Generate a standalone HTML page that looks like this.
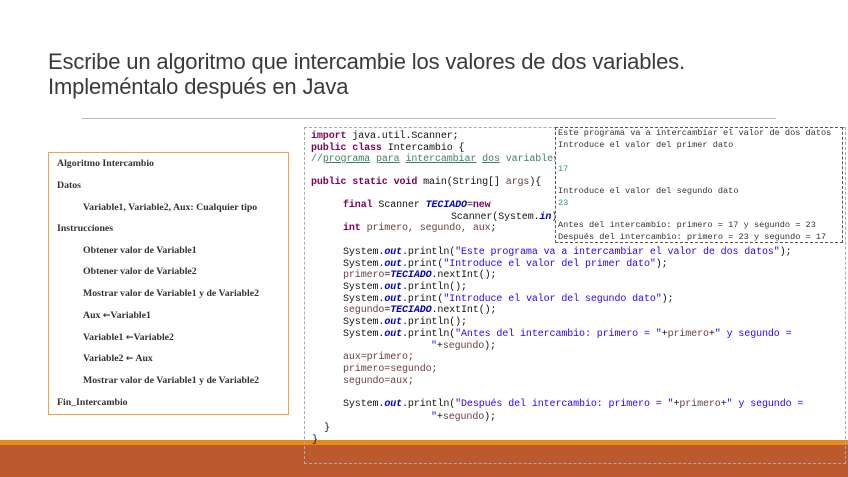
<!DOCTYPE html>
<html><head><meta charset="utf-8"><style>
body{margin:0;width:848px;height:477px;position:relative;overflow:hidden;background:#fff;font-family:"Liberation Sans",sans-serif}
.t{position:absolute;left:48px;font-size:22px;color:#3a3a3a;letter-spacing:-0.15px;line-height:24px}
.hr{position:absolute;left:82px;top:118px;width:694px;height:1px;background:#bbb}
.alg{position:absolute;left:48px;top:152px;width:239px;height:261px;border:1px solid #f0a050}
.alg div{position:absolute;font-family:"Liberation Serif",serif;font-weight:bold;font-size:9.8px;color:#333;white-space:nowrap}
.code{position:absolute;left:304px;top:127px;width:540px;height:335px;border:1px dashed #aaa}
.l{position:absolute;font-family:"Liberation Mono",monospace;font-size:10px;color:#111;white-space:pre;letter-spacing:-0.1px}
.k{color:#7f0055;font-weight:bold}.s{color:#2a00ff}.o{color:#0000c0;font-weight:bold;font-style:italic}.v{color:#6a3e3e}.c{color:#3f7f5f}
.con{position:absolute;left:555px;top:127px;width:286px;height:114px;border:1px dashed #555;background:#fff}
.con div{position:absolute;left:2px;font-family:"Liberation Mono",monospace;font-size:8.6px;color:#333;white-space:pre;letter-spacing:0}
.b1{position:absolute;left:0;top:440px;width:848px;height:5px;background:#e38a1c}
.b2{position:absolute;left:0;top:445px;width:848px;height:32px;background:#bd5a2d}
.a{font-family:"DejaVu Sans",sans-serif;font-weight:bold;font-size:9px}
</style></head><body>
<div class="t" style="top:50px">Escribe un algoritmo que intercambie los valores de dos variables.</div>
<div class="t" style="top:75px">Impleméntalo después en Java</div>
<div class="hr"></div>
<div class="alg">
<div style="left:8px;top:5px">Algoritmo Intercambio</div>
<div style="left:8px;top:27px">Datos</div>
<div style="left:34px;top:49px">Variable1, Variable2, Aux: Cualquier tipo</div>
<div style="left:8px;top:70px">Instrucciones</div>
<div style="left:34px;top:92px">Obtener valor de Variable1</div>
<div style="left:34px;top:113px">Obtener valor de Variable2</div>
<div style="left:34px;top:135px">Mostrar valor de Variable1 y de Variable2</div>
<div style="left:34px;top:157px">Aux <span class="a">←</span>Variable1</div>
<div style="left:34px;top:179px">Variable1 <span class="a">←</span>Variable2</div>
<div style="left:34px;top:200px">Variable2 <span class="a">←</span> Aux</div>
<div style="left:34px;top:222px">Mostrar valor de Variable1 y de Variable2</div>
<div style="left:8px;top:244px">Fin_Intercambio</div>
</div>
<div class="b1"></div><div class="b2"></div>
<div class="code"></div>
<div class="l" style="left:311px;top:131px"><span class="k">import</span> java.util.Scanner;</div>
<div class="l" style="left:311px;top:143px"><span class="k">public class</span> Intercambio {</div>
<div class="l c" style="left:311px;top:154px">//<u>programa</u> <u>para</u> <u>intercambiar</u> <u>dos</u> variables</div>
<div class="l" style="left:311px;top:177px"><span class="k">public static void</span> main(String[] <span class="v">args</span>){</div>
<div class="l" style="left:343px;top:200px"><span class="k">final</span> Scanner <span class="o">TECIADO</span>=<span class="k">new</span></div>
<div class="l" style="left:451px;top:212px">Scanner(System.<span class="o">in</span>);</div>
<div class="l" style="left:343px;top:223px"><span class="k">int</span> <span class="v">primero, segundo, aux</span>;</div>
<div class="l" style="left:343px;top:247px">System.<span class="o">out</span>.println(<span class="s">"Este programa va a intercambiar el valor de dos datos"</span>);</div>
<div class="l" style="left:343px;top:259px">System.<span class="o">out</span>.print(<span class="s">"Introduce el valor del primer dato"</span>);</div>
<div class="l" style="left:343px;top:270px"><span class="v">primero</span>=<span class="o">TECIADO</span>.nextInt();</div>
<div class="l" style="left:343px;top:282px">System.<span class="o">out</span>.println();</div>
<div class="l" style="left:343px;top:294px">System.<span class="o">out</span>.print(<span class="s">"Introduce el valor del segundo dato"</span>);</div>
<div class="l" style="left:343px;top:305px"><span class="v">segundo</span>=<span class="o">TECIADO</span>.nextInt();</div>
<div class="l" style="left:343px;top:317px">System.<span class="o">out</span>.println();</div>
<div class="l" style="left:343px;top:329px">System.<span class="o">out</span>.println(<span class="s">"Antes del intercambio: primero = "</span>+<span class="v">primero</span>+<span class="s">" y segundo =</span></div>
<div class="l s" style="left:431px;top:341px">"<span style="color:#111">+</span><span class="v">segundo</span><span style="color:#111">);</span></div>
<div class="l v" style="left:343px;top:352px">aux=primero;</div>
<div class="l v" style="left:343px;top:364px">primero=segundo;</div>
<div class="l v" style="left:343px;top:376px">segundo=aux;</div>
<div class="l" style="left:343px;top:399px">System.<span class="o">out</span>.println(<span class="s">"Después del intercambio: primero = "</span>+<span class="v">primero</span>+<span class="s">" y segundo =</span></div>
<div class="l s" style="left:431px;top:412px">"<span style="color:#111">+</span><span class="v">segundo</span><span style="color:#111">);</span></div>
<div class="l" style="left:324px;top:423px">}</div>
<div class="l" style="left:312px;top:435px">}</div>
<div class="con">
<div style="top:0px">Este programa va a intercambiar el valor de dos datos</div>
<div style="top:12px">Introduce el valor del primer dato</div>
<div style="top:36px;color:#2a9a8a">17</div>
<div style="top:58px">Introduce el valor del segundo dato</div>
<div style="top:70px;color:#2a9a8a">23</div>
<div style="top:92px">Antes del intercambio: primero = 17 y segundo = 23</div>
<div style="top:104px">Después del intercambio: primero = 23 y segundo = 17</div>
</div>
</body></html>
